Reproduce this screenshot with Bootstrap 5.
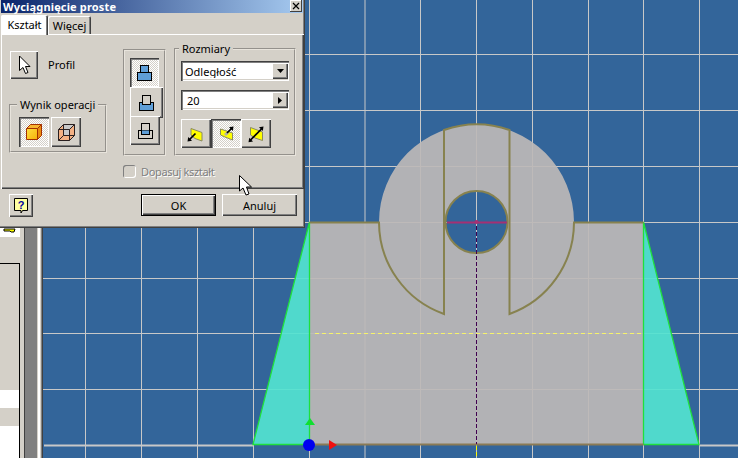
<!DOCTYPE html>
<html lang="pl">
<head>
<meta charset="utf-8">
<title>Wyciągnięcie proste</title>
<link href="https://cdn.jsdelivr.net/npm/bootstrap@5.3.0/dist/css/bootstrap.min.css" rel="stylesheet">
<style>
html,body{margin:0;height:458px;overflow:hidden;background:#d4d0c8}
body{font:11px/13px "Noto Sans","Liberation Sans",sans-serif;color:#000}
.stage{width:738px;height:458px;position:relative}
.sidepane{width:24px;background:#d4d0c8}
.sidetop{height:237px;width:20px;background:#fff}
.sidebox{height:195px;margin-top:26px;width:20px;border-top:1px solid #000;border-right:1px solid #000;padding-top:126px}
.sidestripe{height:18px;background:#fff}
.sidefill{height:32px;margin-top:18px;background:#fff}
.gutter{width:19px;background:#808080;border-left:1px solid #404040;border-right:1px solid #404040}
.gutter-edge{width:4px;background:linear-gradient(90deg,#d4d0c8 0 1px,#fff 1px 3px,#d4d0c8 3px)}
.gutter-core{width:12px;background:#808080}
.canvas-view{width:695px;height:458px;display:block;background:#33659a}
.dlg{position:absolute;left:0;top:0;width:305px;height:228px;background:#d4d0c8;box-shadow:inset -1px -1px 0 #404040,inset -2px -2px 0 #808080}
.dlg-title{height:13px;margin:0 2px 2px 1px;padding-left:2px;background:linear-gradient(90deg,#0a246a,#a6caf0);color:#fff;font-weight:700;font-size:11px;line-height:13px;letter-spacing:.16px;white-space:nowrap}
.dlg-close{width:12px;height:12px;margin-right:1px;padding:0;background:#d4d0c8;box-shadow:inset -1px -1px 0 #404040,inset 1px 1px 0 #fff;border:0;border-radius:0}
.dlg .nav-tabs{border:0;height:19px;margin-left:1px;flex-wrap:nowrap}
.dlg .nav-link{padding:0;border:0;border-radius:2px 2px 0 0;background:#d4d0c8;color:#000;text-align:center;font-size:11px;line-height:13px;box-shadow:inset 1px 1px 0 #fff,inset -1px 0 0 #404040,inset -2px 0 0 #808080}
.tab-on{width:47px;height:20px;padding-top:3px!important;position:relative;z-index:2}
.tab-off{width:43px;height:18px;margin-top:1px;padding-top:3px!important}
.sheet{height:155px;margin:0 1px;padding:8px 8px 0 8px;box-shadow:inset 1px 1px 0 #fff,inset -1px -1px 0 #404040,inset -2px -2px 0 #808080}
.pane-left{width:98px;margin-right:16px}
.pane-mid{width:43px;height:107px;margin-top:7px;margin-right:8px;padding:7px 0 0 5px;border:2px groove #e8e4dc}
.win-btn{display:flex;align-items:center;justify-content:center;padding:0;border:0;border-radius:0;background:#d4d0c8;color:#000;box-shadow:inset 1px 1px 0 #fff,inset -1px -1px 0 #404040,inset -2px -2px 0 #808080}
.win-btn:hover,.win-btn:active,.win-btn:focus{background:#d4d0c8;color:#000}
.win-on,.win-on:hover{background:conic-gradient(#fff 25%,#d4d0c8 0 50%,#fff 0 75%,#d4d0c8 0) 0 0/2px 2px;box-shadow:inset 1px 1px 0 #404040,inset 2px 2px 0 #808080,inset -1px -1px 0 #fff}
.profile-btn{width:28px;height:28px;margin:9px 10px 0 1px}
.profile-row{height:44px;margin-bottom:12px}
.grp{border:2px groove #e8e4dc;margin:0;padding:0;min-width:0}
.grp legend{float:none;width:auto;padding:0 3px;font-size:11px;line-height:13px;white-space:nowrap}
.grp-out{height:55px;padding:6px 0 0 8px}
.grp-out legend{margin:0 0 0 -2px}
.grp-size{width:122px;height:114px;padding:6px 0 0 5px}
.grp-size legend{margin:0 0 0 -2px}
.mid-1{width:29px;height:29px}
.mid-2{width:33px;height:31px}
.mid-3{width:30px;height:29px;margin-top:-2px}
.out-btn{width:30px;height:30px}
.out-gap{gap:2px}
.field-wrap{width:108px;height:20px;margin-bottom:9px;box-shadow:inset 1px 1px 0 #404040,inset 2px 2px 0 #808080,inset -1px -1px 0 #fff}
.field-wrap .form-control,.field-wrap .form-select{background:#fff;border:0;border-radius:0;padding:1px 0 0 2px;height:16px;margin:2px 0 2px 2px;font-size:11px;line-height:13px;color:#000;box-shadow:none;min-height:0;appearance:none}
.field-wrap .form-control{padding-left:4px}
.field-arrow{width:16px;height:16px;margin:2px 1px 2px 0;flex:none}
.dirs .win-btn{width:30px;height:29px}
.fit-row{margin:9px 0 0 114px;height:13px;color:#808080;text-shadow:1px 1px 0 #fff}
.fit-label{letter-spacing:-.35px}
.fit-box{width:13px;height:13px;margin:0 5px 0 0;padding:0;flex:none;background:#d4d0c8;border:0;border-radius:0;box-shadow:inset 1px 1px 0 #808080,inset -1px -1px 0 #fff}
.form-check-input.fit-box:disabled{opacity:1}
.dlg-foot{padding:5px 8px 0 9px;gap:6px}
.help-btn{width:24px;height:23px;margin-right:auto}
.cmd-btn{width:75px;height:22px;font-size:11px;line-height:13px}
.cmd-main{outline:1px solid #000;outline-offset:-1px;box-shadow:inset 2px 2px 0 #fff,inset -2px -2px 0 #404040,inset -3px -3px 0 #808080}
.mouse-cursor{position:absolute;left:239px;top:175px}
</style>
</head>
<body>
<div class="stage d-flex">
  <div class="sidepane flex-shrink-0">
    <div class="sidetop d-flex align-items-end justify-content-center">
      <svg width="14" height="9" viewBox="0 0 14 9"><path d="M1 1H12L11 4H8L7 3H1Z" fill="#ff0" stroke="#000"/></svg>
    </div>
    <div class="sidebox">
      <div class="sidestripe"></div>
      <div class="sidefill"></div>
    </div>
  </div>
  <div class="gutter d-flex flex-shrink-0">
    <div class="gutter-core"></div>
    <div class="gutter-edge"></div>
    <div class="flex-grow-1"></div>
  </div>
  <svg class="canvas-view flex-shrink-0" viewBox="43 0 695 458" aria-hidden="true">
    <g stroke="#c8c8c8" stroke-width="1">
      <path d="M85.5 0V458M141.5 0V458M197.5 0V458M253.5 0V458M309.5 0V458M365 0V458M420.5 0V458M476.5 0V458M532.5 0V458M588.5 0V458M643.5 0V458M699.5 0V458"/>
      <path d="M43 54.5H738M43 110.5H738M43 166.5H738M43 222.5H738M43 278.5H738M43 333.5H738M43 389.5H738"/>
    </g>
    <path d="M44 445.500H253M699 445.500H738" stroke="#c8c8c8" stroke-width="2"/>
    <path d="M253 444.500L309.500 222V444.500ZM643.500 222L699 444.500H643.500Z" fill="#53e3d0" fill-opacity=".92"/>
    <path fill-rule="evenodd" fill="#bdb9b7" fill-opacity=".92" d="M309.500 222H379A97.500 97.500 0 1 1 574 222H643.500V444.500H309.500ZM445.500 222A31 31 0 1 0 507.500 222A31 31 0 1 0 445.500 222Z"/>
    <path d="M253 444.500L309.500 222V444.500ZM643.500 222L699 444.500H643.500Z" fill="none" stroke="#1fe03c" stroke-width="1.300"/>
    <path d="M309.500 222.500H379A97.500 97.500 0 0 0 444 314V130A97.500 97.500 0 0 1 509.500 130V314A97.500 97.500 0 0 0 574 222.500H643.500" fill="none" stroke="#87824f" stroke-width="2"/>
    <circle cx="476.500" cy="222" r="31" fill="none" stroke="#87824f" stroke-width="2"/>
    <path d="M309.500 444.500H643.500" stroke="#8a7a55" stroke-width="2"/>
    <path d="M447 222.500H507" stroke="#a63073" stroke-width="1.800"/>
    <circle cx="476.500" cy="222" r="2" fill="#a63073"/>
    <path d="M476.500 226V444" stroke="#40004f" stroke-width="1" stroke-dasharray="4 2"/>
    <path d="M476.500 446V458" stroke="#ff0" stroke-width="1" stroke-dasharray="4 2"/>
    <path d="M315 333.500H641" stroke="#f6f36a" stroke-width="1" stroke-dasharray="4 3"/>
    <path d="M310 418L315 425H305Z" fill="#10e030"/>
    <path d="M329 440L337 445L329 450Z" fill="#f01010"/>
    <circle cx="309" cy="445" r="6" fill="#0000f0"/>
  </svg>

  <div class="dlg">
    <div class="dlg-title d-flex justify-content-between">
      <span>Wyciągnięcie proste</span>
      <button class="dlg-close btn d-flex align-items-center justify-content-center" type="button" aria-label="Zamknij">
        <svg width="8" height="8" viewBox="0 0 8 8"><path d="M1 1L7 7M7 1L1 7" stroke="#000" stroke-width="1.200"/></svg>
      </button>
    </div>
    <ul class="nav nav-tabs">
      <li class="nav-item"><a class="nav-link active tab-on" href="#">Kształt</a></li>
      <li class="nav-item"><a class="nav-link tab-off" href="#">Więcej</a></li>
    </ul>
    <div class="sheet">
      <div class="d-flex">
        <div class="pane-left">
          <div class="profile-row d-flex align-items-start">
            <button class="win-btn btn profile-btn" type="button" aria-label="Profil">
              <svg width="13" height="20" viewBox="0 0 13 20"><path d="M1.500 1V15.500L5 12.500L7.500 18.500L10 17.500L7.500 11.500H12Z" fill="#fff" stroke="#000"/></svg>
            </button>
            <span class="mt-2 pt-2">Profil</span>
          </div>
          <fieldset class="grp grp-out">
            <legend>Wynik operacji</legend>
            <div class="d-flex out-gap">
              <button class="win-btn win-on btn out-btn" type="button" aria-label="Bryła">
                <svg width="16" height="16" viewBox="0 0 16 16"><defs><linearGradient id="cubeg" x1="0" y1="0" x2="1" y2="1"><stop offset="0" stop-color="#ffe84a"/><stop offset="1" stop-color="#f5a800"/></linearGradient></defs><path d="M.5 4.500L4.500.5H15.500V11.500L11.500 15.500H.5Z" fill="url(#cubeg)"/><path d="M11.500 4.500L15.500.5V11.500L11.500 15.500Z" fill="#e88a10"/><path d="M.5 4.500L4.500.5H15.500L11.500 4.500Z" fill="#f7b530"/><path d="M.5 4.500L4.500.5H15.500V11.500L11.500 15.500H.5ZM.5 4.500H11.500V15.500M11.500 4.500L15.500.5" fill="none" stroke="#a33000"/></svg>
              </button>
              <button class="win-btn btn out-btn" type="button" aria-label="Powierzchnia">
                <svg width="17" height="17" viewBox="0 0 17 17"><path d="M.5 5.500L5.500.5H16.500V11.500L11.500 16.500H.5Z" fill="#f4b184"/><rect x="5.500" y=".5" width="11" height="11" fill="#c9c9c9"/><path d="M11.500 5.500L16.500.5V11.500L11.500 16.500Z" fill="#f4b184"/><path d="M.5 5.500L5.500.5H16.500V11.500L11.500 16.500H.5ZM.5 5.500H11.500V16.500M11.500 5.500L16.500.5M5.500.5V11.500H16.500M5.500 11.500L.5 16.500" fill="none" stroke="#2a2020"/></svg>
              </button>
            </div>
          </fieldset>
        </div>
        <div class="pane-mid d-flex flex-column align-items-start">
          <button class="win-btn win-on btn mid-1" type="button" aria-label="Łączenie">
            <svg width="15" height="16" viewBox="0 0 15 16"><rect x="3.500" y=".5" width="8" height="8" fill="#5f9fd8" stroke="#000"/><rect x=".5" y="7.500" width="14" height="8" fill="#5f9fd8" stroke="#000"/></svg>
          </button>
          <button class="win-btn btn mid-2" type="button" aria-label="Wycięcie">
            <svg width="15" height="16" viewBox="0 0 15 16"><rect x=".5" y="7.500" width="14" height="8" fill="#5f9fd8" stroke="#000"/><rect x="3.500" y=".5" width="8" height="9" fill="#d4d0c8" stroke="#000"/></svg>
          </button>
          <button class="win-btn btn mid-3" type="button" aria-label="Przecięcie">
            <svg width="15" height="16" viewBox="0 0 15 16"><rect x=".5" y="7.500" width="14" height="8" fill="#d4d0c8" stroke="#000"/><rect x="3.500" y="7.500" width="8" height="4" fill="#5f9fd8"/><rect x="3.500" y=".5" width="8" height="11" fill="none" stroke="#000"/></svg>
          </button>
        </div>
        <fieldset class="grp grp-size">
          <legend>Rozmiary</legend>
          <div class="field-wrap d-flex">
            <select class="form-select flex-grow-1" aria-label="Rozmiary"><option>Odległość</option></select>
            <button class="win-btn btn field-arrow" type="button" aria-label="Rozwiń">
              <svg width="7" height="4" viewBox="0 0 7 4"><path d="M0 0H7L3.500 4Z"/></svg>
            </button>
          </div>
          <div class="field-wrap d-flex">
            <input class="form-control flex-grow-1" value="20" aria-label="Odległość">
            <button class="win-btn btn field-arrow" type="button" aria-label="Dalej">
              <svg width="4" height="7" viewBox="0 0 4 7"><path d="M0 0V7L4 3.500Z"/></svg>
            </button>
          </div>
          <div class="dirs d-flex">
            <button class="win-btn btn" type="button" aria-label="Kierunek 1">
              <svg width="20" height="20" viewBox="0 0 20 20"><path d="M5 4.500L16 8.500V17L9 14.500L5 11Z" fill="#ff0" stroke="#8a8a60"/><path d="M9.500 9.500L3.500 15.500" stroke="#000" stroke-width="1.700"/><path d="M1.500 17.500L2.200 13L6 16.800Z"/></svg>
            </button>
            <button class="win-btn win-on btn" type="button" aria-label="Kierunek 2">
              <svg width="20" height="20" viewBox="0 0 20 20"><path d="M4.500 5L12 7.500L16.500 9V16L9 13L4.500 11Z" fill="#ff0" stroke="#8a8a60"/><path d="M8 10L11 7.500L13 9.500L10 12Z" fill="#b0b0a8"/><path d="M11 9L15.500 4.500" stroke="#000" stroke-width="1.700"/><path d="M17.500 2.500L16.800 7L13 3.200Z"/></svg>
            </button>
            <button class="win-btn btn" type="button" aria-label="Kierunek 3">
              <svg width="22" height="22" viewBox="0 0 22 22"><path d="M5.500 4.500L17.500 9V17.500L10 15L5.500 12Z" fill="#ff0" stroke="#8a8a60"/><path d="M5.500 17L16.500 6" stroke="#000" stroke-width="1.700"/><path d="M18.500 3.500L17.800 8L14 4.200Z"/><path d="M3.500 19.200L4.200 14.700L8 18.500Z"/></svg>
            </button>
          </div>
        </fieldset>
      </div>
      <div class="fit-row d-flex align-items-center">
        <input class="form-check-input fit-box" type="checkbox" disabled aria-label="Dopasuj kształt">
        <span class="fit-label">Dopasuj kształt</span>
      </div>
    </div>
    <div class="dlg-foot d-flex">
      <button class="win-btn btn help-btn" type="button" aria-label="Pomoc">
        <svg width="16" height="17" viewBox="0 0 16 17"><path d="M1.500 1.500H14.500V13.500H9.500L8 16V13.500H1.500Z" fill="#ffffa0" stroke="#000"/><text x="8" y="11.500" font-size="11" font-weight="700" text-anchor="middle" fill="#0000a0" font-family="Liberation Sans">?</text></svg>
      </button>
      <button class="win-btn btn cmd-btn cmd-main" type="button">OK</button>
      <button class="win-btn btn cmd-btn" type="button">Anuluj</button>
    </div>
  </div>
  <svg class="mouse-cursor" width="13" height="21" viewBox="0 0 13 21" aria-hidden="true"><path d="M.5.500V16L4 13L7 20L10 19L7.500 12H12.500Z" fill="#fff" stroke="#000"/></svg>
</div>
</body>
</html>
